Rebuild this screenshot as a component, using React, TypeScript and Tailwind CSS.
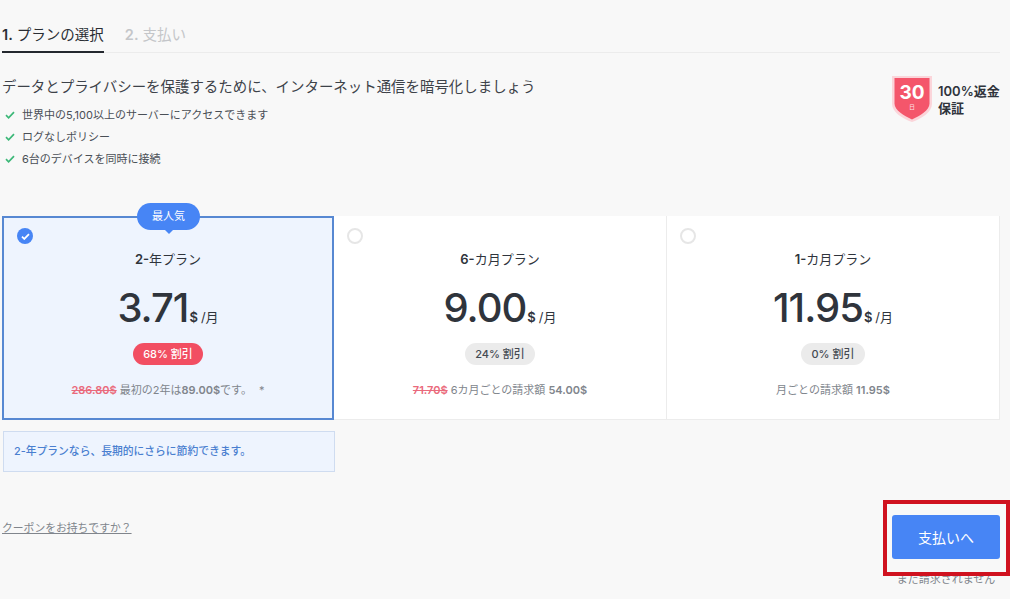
const FONT = "font-['Inter','Noto_Sans_CJK_JP',sans-serif]";

const PLANS = [
  {
    title: "2-",
    unit: "年プラン",
    price: "3.71",
    discount: "68% 割引",
    was: "286.80$",
    note: (
      <>
        最初の2年は<b className="font-semibold">89.00$</b>です。 <span className="ml-1">*</span>
      </>
    ),
    selected: true,
  },
  {
    title: "6-",
    unit: "カ月プラン",
    price: "9.00",
    discount: "24% 割引",
    was: "71.70$",
    note: (
      <>
        6カ月ごとの請求額 <b className="font-semibold">54.00$</b>
      </>
    ),
    selected: false,
  },
  {
    title: "1-",
    unit: "カ月プラン",
    price: "11.95",
    discount: "0% 割引",
    was: "",
    note: (
      <>
        月ごとの請求額 <b className="font-semibold">11.95$</b>
      </>
    ),
    selected: false,
  },
];

function Check() {
  return (
    <svg width="10" height="8" viewBox="0 0 10 8" fill="none" className="shrink-0">
      <path d="M1 4.2 3.6 6.8 9 1.2" stroke="#3cb878" strokeWidth="1.7" />
    </svg>
  );
}

function Shield() {
  return (
    <svg width="42" height="48" viewBox="0 0 42 48" className="shrink-0">
      <path d="M1 1h40v28c0 8-11 15-20 18C12 44 1 37 1 29z" fill="#fbd5da" />
      <path d="M3.500 3h35v25.500c0 7-10 12.500-17.500 16-7.500-3.500-17.500-9-17.500-16z" fill="#f4566b" />
      <text x="21" y="24" textAnchor="middle" fill="#fff" fontSize="19" fontWeight="700">
        30
      </text>
      <text x="21" y="34" textAnchor="middle" fill="#fde3e6" fontSize="6">
        日
      </text>
    </svg>
  );
}

function PlanCard({ plan }: { plan: (typeof PLANS)[number] }) {
  return (
    <div
      className={
        plan.selected
          ? "relative flex h-[204px] flex-col items-center border-2 border-[#5788d2] bg-[#eef4fe]"
          : "relative flex h-[204px] flex-col items-center border-r border-b border-[#ececec] bg-white py-[2px]"
      }
    >
      {plan.selected && (
        <div className="absolute -top-[15px] left-[133px] flex h-[27px] w-[63px] items-center justify-center rounded-full bg-[#4785f5] text-[11px] text-white after:absolute after:top-[26px] after:left-[27px] after:border-x-[5px] after:border-t-[5px] after:border-x-transparent after:border-t-[#4785f5]">
          最人気
        </div>
      )}
      <div className="flex w-full pt-[10px] pl-[13px]">
        {plan.selected ? (
          <span className="flex h-4 w-4 items-center justify-center rounded-full bg-[#4785f5]">
            <svg width="9" height="7" viewBox="0 0 10 8" fill="none">
              <path d="M1 4.200 3.600 6.800 9 1.200" stroke="#fff" strokeWidth="2" />
            </svg>
          </span>
        ) : (
          <span className="h-4 w-4 rounded-full border-2 border-[#e6e6e6] bg-white" />
        )}
      </div>
      <div className="mt-[5px] text-[13px] leading-5 text-[#2f343c]">
        <b className="font-semibold">{plan.title}</b>
        {plan.unit}
      </div>
      <div className="mt-[14px] flex h-[50px] items-baseline text-[#2f343c]">
        <span className="text-[40px] leading-[50px] font-medium tracking-[-1px]">{plan.price}</span>
        <span className="ml-[1px] text-[13px] font-semibold">$</span>
        <span className="ml-[3px] text-[13px]">/月</span>
      </div>
      <div
        className={
          plan.selected
            ? "mt-[10px] flex h-[22px] items-center rounded-full bg-[#f24e62] px-[10.5px] text-[11px] font-medium text-white"
            : "mt-[10px] flex h-[22px] items-center rounded-full bg-[#ebebeb] px-[10.5px] text-[11px] font-medium text-[#444a52]"
        }
      >
        {plan.discount}
      </div>
      <div className="mt-[17px] text-[11px] leading-4 text-[#80858c]">
        {plan.was && <b className="mr-[3px] font-semibold text-[#ea6a7c] line-through">{plan.was}</b>}
        {plan.note}
      </div>
    </div>
  );
}

export default function App() {
  return (
    <div className={`relative h-[599px] w-[1010px] overflow-hidden bg-[#f8f8f8] pr-[10px] pl-[2px] ${FONT}`}>
      <div className="flex h-[53px] items-end gap-[21px] border-b border-[#ececec] text-[14.5px]">
        <div className="-mb-px border-b-2 border-[#24282e] pb-[6px] leading-5 text-[#2a2e34]">
          <b className="font-semibold">1.</b> プランの選択
        </div>
        <div className="pb-[7px] leading-5 text-[#c4c6c9]">
          <b className="font-semibold">2.</b> 支払い
        </div>
      </div>

      <div className="flex h-[163px] justify-between">
        <div>
          <h1 className="mt-[24px] text-[14.45px] leading-5 font-normal text-[#3d4249]">
            データとプライバシーを保護するために、インターネット通信を暗号化しましょう
          </h1>
          <ul className="mt-[10px] flex flex-col gap-[6px] pl-[3px] text-[11px] leading-4 text-[#4a4f56]">
            <li className="flex items-center gap-[7px]">
              <Check />
              世界中の5,100以上のサーバーにアクセスできます
            </li>
            <li className="flex items-center gap-[7px]">
              <Check />
              ログなしポリシー
            </li>
            <li className="flex items-center gap-[7px]">
              <Check />
              6台のデバイスを同時に接続
            </li>
          </ul>
        </div>
        <div className="mt-[22px] flex h-[48px] items-start gap-[5px]">
          <Shield />
          <div className="mt-[8px] w-[62px] text-[13px] leading-[17px] font-semibold text-[#2f343c]">
            <div className="whitespace-nowrap">100%返金</div>
            <div>保証</div>
          </div>
        </div>
      </div>

      <div className="grid grid-cols-[332px_333px_333px]">
        {PLANS.map((plan) => (
          <PlanCard key={plan.price} plan={plan} />
        ))}
      </div>

      <div className="mt-[11px] ml-px flex h-[41px] w-[332px] items-center border border-[#cfdcf0] bg-[#eef4fe] px-[10px] pt-px text-[10.8px] font-medium text-[#4a7fd0]">
        2-年プランなら、長期的にさらに節約できます。
      </div>

      <div className="mt-[43px] flex items-start justify-between">
        <a className="mt-[6px] text-[10.8px] leading-4 text-[#80858c] underline">クーポンをお持ちですか？</a>
        <div className="flex w-[108px] flex-col items-center">
          <button className="h-[44px] w-full rounded-[3px] bg-[#4785f5] text-[14px] text-white">支払いへ</button>
          <div className="mt-[12px] text-[11px] leading-4 whitespace-nowrap text-[#80858c]">まだ請求されません</div>
        </div>
      </div>

      {/* red annotation drawn over the screenshot */}
      <div className="absolute top-[500px] left-[883px] h-[76px] w-[127px] border-4 border-[#d0121f]" />
    </div>
  );
}
